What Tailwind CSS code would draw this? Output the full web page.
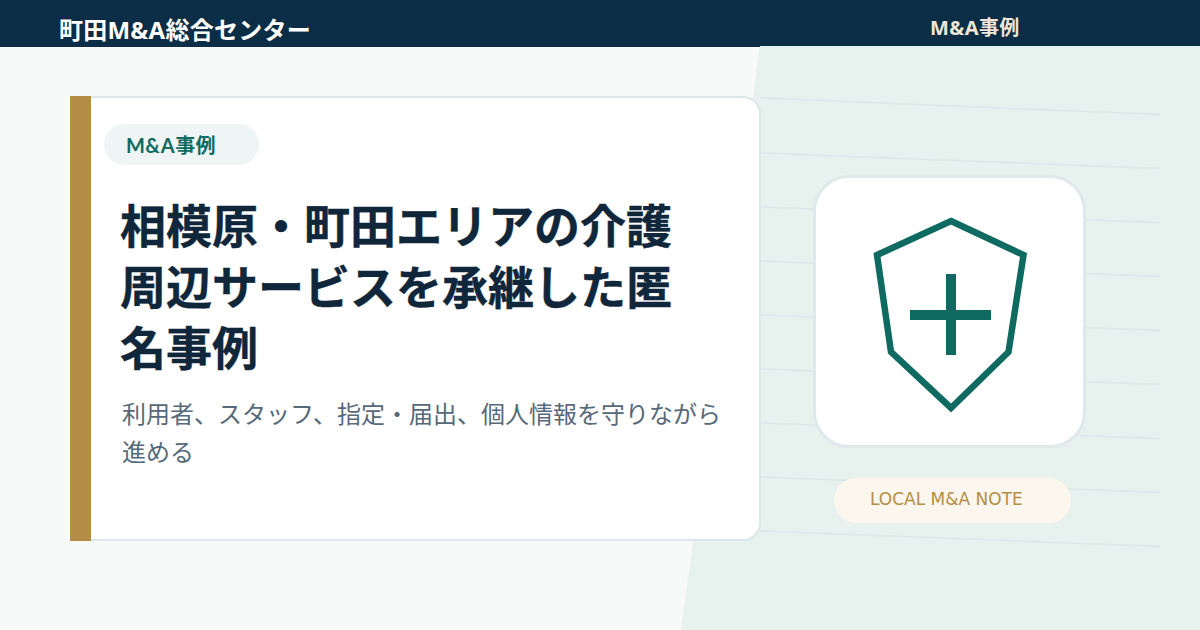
<!DOCTYPE html>
<html lang="ja">
<head>
  <meta charset="UTF-8" />
  <title>町田M&amp;A総合センター</title>
  <script src="https://cdn.jsdelivr.net/npm/@tailwindcss/browser@4"></script>
</head>
<body class="bg-[#f7faf9] font-['Noto_Sans_CJK_JP',sans-serif]">
  <div class="relative w-[1200px] h-[630px] overflow-hidden">

    <!-- background panel and faint lines -->
    <svg class="absolute left-0 top-0" width="1200" height="630" viewBox="0 0 1200 630">
      <polygon points="760,46 1200,46 1200,630 681,630" fill="#e7f1ee" />
      <g stroke="#dce7e9" stroke-width="1.5">
        <line x1="760" y1="98" x2="1160" y2="114.5" />
        <line x1="760" y1="153" x2="1160" y2="168.5" />
        <line x1="760" y1="207" x2="1160" y2="222.5" />
        <line x1="760" y1="261" x2="1160" y2="276.5" />
        <line x1="760" y1="315" x2="1160" y2="330.5" />
        <line x1="760" y1="369" x2="1160" y2="384.5" />
        <line x1="760" y1="423" x2="1160" y2="438.5" />
        <line x1="760" y1="477" x2="1160" y2="492.5" />
        <line x1="760" y1="531" x2="1160" y2="546.5" />
      </g>
    </svg>

    <header class="relative h-[46px] bg-[#0b2d45] flex">
      <div class="w-[760px] pl-[59px] pt-[12px] text-[24px] leading-[36px] tracking-[0.01em] font-bold text-white font-['Noto_Sans','Noto_Sans_CJK_JP',sans-serif] whitespace-nowrap">町田M&amp;A総合センター</div>
      <nav class="pl-[170px] pt-[13px] text-[20px] leading-[30px] tracking-[0.02em] font-bold text-[#efe7d6] font-['Noto_Sans','Noto_Sans_CJK_JP',sans-serif] whitespace-nowrap">M&amp;A事例</nav>
    </header>
    <div class="relative w-[760px] h-px bg-[#0b2d45]"></div>

    <main class="relative flex pl-[70px] pt-[49px]">
      <!-- main card -->
      <section class="flex w-[691px] h-[445px]">
        <div class="w-[21px] bg-[#b68d46]"></div>
        <div class="flex-1 bg-white border-2 border-l-0 border-[#dce7ea] rounded-r-[18px] pt-[26px]">
          <span class="ml-[13px] inline-flex items-center w-[155px] h-[41px] pl-[22px] rounded-full bg-[#eef5f4] text-[20px] tracking-[0.02em] font-bold text-[#0f6b62] font-['Lato','Noto_Sans_CJK_JP',sans-serif]">M&amp;A事例</span>
          <h1 class="mt-[28px] ml-[29px] w-[560px] text-[46px] leading-[61px] font-bold text-[#10263a] [-webkit-text-stroke:0.4px_#10263a]">相模原・町田エリアの介護周辺サービスを承継した匿名事例</h1>
          <p class="mt-[18px] ml-[31px] w-[606px] text-[24px] leading-[38px] text-[#55697a]">利用者、スタッフ、指定・届出、個人情報を守りながら進める</p>
        </div>
      </section>

      <!-- right column -->
      <aside class="ml-[52px] pt-[79px] flex flex-col items-center w-[273px]">
        <div class="w-[273px] h-[273px] bg-white border-[3px] border-[#dfe8ea] rounded-[36px] flex items-center justify-center">
          <svg width="160" height="200" viewBox="0 0 160 200" fill="none" stroke="#0f6b62" class="ml-[6px] mt-[3px]">
            <polygon points="78,8 150.5,42 135.5,139 78,195 18,139 4,42" stroke-width="6.5" />
            <path d="M78 61V142M37 102H118" stroke-width="10" />
          </svg>
        </div>
        <div class="mt-[30px] ml-[6px] w-[237px] h-[45px] pl-[36px] pb-[2px] rounded-full bg-[#fbf7ee] flex items-center text-[17px] text-[#b68d46] font-['DejaVu_Sans',sans-serif] whitespace-nowrap">LOCAL M&amp;A NOTE</div>
      </aside>
    </main>
  </div>
</body>
</html>
